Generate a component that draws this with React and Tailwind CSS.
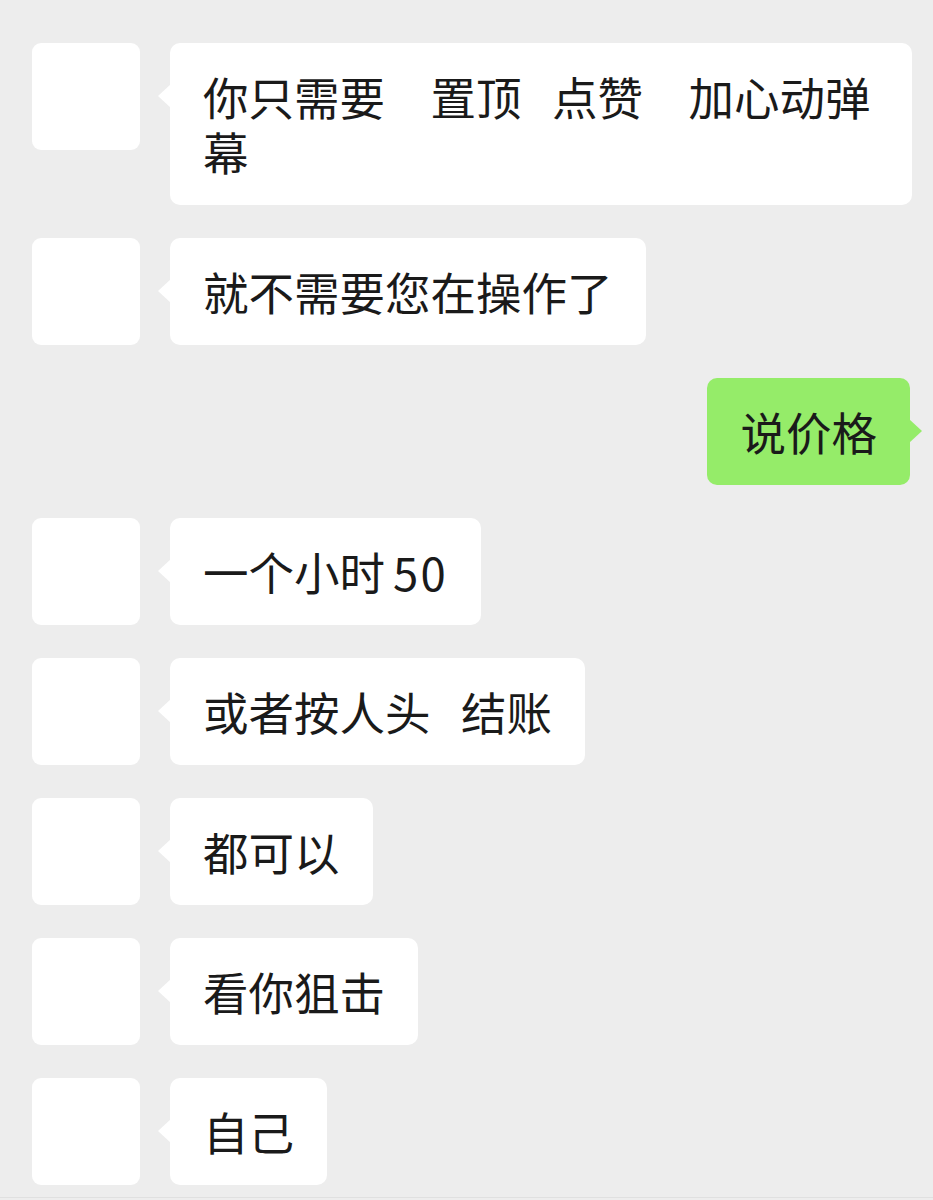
const font = { fontFamily: '"Noto Sans CJK SC", "Noto Sans", sans-serif' }

function Avatar() {
  return <div className="w-[108px] h-[107px] shrink-0 rounded-[9px] bg-white" />
}

function Incoming({ children }) {
  return (
    <div className="flex items-start">
      <Avatar />
      <div className="relative ml-[30px] max-w-[742px] rounded-[10px] bg-white px-[33px] py-[26px] text-[45.5px] leading-[55px] text-[#1a1a1a] whitespace-pre-wrap">
        <span className="absolute left-[-12px] top-[41px] h-0 w-0 border-y-[12px] border-r-[13px] border-y-transparent border-r-white" />
        {children}
      </div>
    </div>
  )
}

function Outgoing({ children }) {
  return (
    <div className="flex justify-end pr-[23px]">
      <div className="relative rounded-[10px] bg-[#95ec69] px-[33px] py-[26px] text-[45.5px] leading-[55px] text-[#1a1a1a]">
        {children}
        <span className="absolute right-[-12px] top-[41px] h-0 w-0 border-y-[12px] border-l-[13px] border-y-transparent border-l-[#95ec69]" />
      </div>
    </div>
  )
}

export default function App() {
  return (
    <div className="min-h-[1200px] w-[933px] bg-[#ededed]" style={font}>
      <div className="flex flex-col gap-[33px] pl-[32px] pt-[43px] pb-[12px]">
        <Incoming>{'你只需要\u3000置顶   点赞\u3000加心动弹幕'}</Incoming>
        <Incoming>就不需要您在操作了</Incoming>
        <Outgoing>说价格</Outgoing>
        <Incoming>
          一个小时<span className="ml-[8px] tracking-[0.05em]">50</span>
        </Incoming>
        <Incoming>{'或者按人头   结账'}</Incoming>
        <Incoming>都可以</Incoming>
        <Incoming>看你狙击</Incoming>
        <Incoming>自己</Incoming>
      </div>
      <div className="h-px bg-[#e0e0e0]" />
    </div>
  )
}
